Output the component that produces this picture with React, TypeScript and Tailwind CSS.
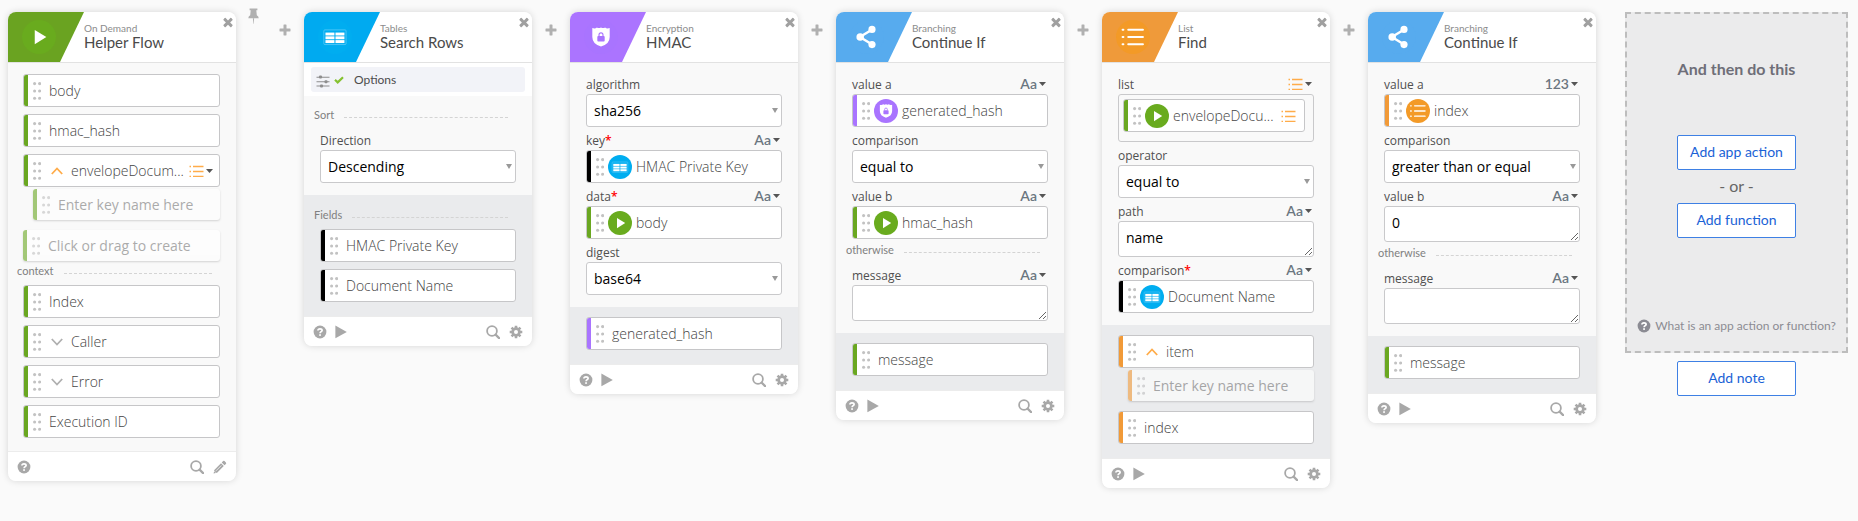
import React, { useId } from "react";

type Tone = "green" | "black" | "purple" | "orange";
type Kind = "play" | "table" | "lock" | "share" | "list";

const barTone: Record<Tone, string> = {
  green: "bg-[#6aa721]",
  black: "bg-black",
  purple: "bg-[#a974ff]",
  orange: "bg-[#f19a38]",
};

const badgeTone: Record<Kind, string> = {
  play: "bg-[#69ab1e]",
  table: "bg-[#00adf0]",
  lock: "bg-[#a974ff]",
  share: "bg-[#57abee]",
  list: "bg-[#f39a27]",
};

const headTone: Record<Kind, string> = {
  play: "bg-[#6aa321]",
  table: "bg-[#00aaf0]",
  lock: "bg-[#ab74ff]",
  share: "bg-[#57abee]",
  list: "bg-[#ef9a3a]",
};

/* ---------- drawings ---------- */

function Close() {
  return (
    <svg viewBox="0 0 1792 1792" className="size-3.5" fill="currentColor" aria-hidden="true">
      <path d="M1490 1322q0 40-28 68l-136 136q-28 28-68 28t-68-28l-294-294-294 294q-28 28-68 28t-68-28l-136-136q-28-28-28-68t28-68l294-294-294-294q-28-28-28-68t28-68l136-136q28-28 68-28t68 28l294 294 294-294q28-28 68-28t68 28l136 136q28 28 28 68t-28 68l-294 294 294 294q28 28 28 68z" />
    </svg>
  );
}

function Plus() {
  return (
    <svg viewBox="0 0 12 12" className="size-3" fill="currentColor" aria-hidden="true">
      <path d="M4.9 .5h2.2q.4 0 .4.4v3.6h3.6q.4 0 .4.4v2.2q0 .4-.4.4H7.500v3.600q0 .4-.4.4H4.900q-.4 0-.4-.4V7.500H.900q-.4 0-.4-.4V4.900q0-.4.4-.4h3.600V.900q0-.4.4-.4z" />
    </svg>
  );
}

function Pin() {
  return (
    <svg viewBox="0 0 11 16" className="h-4 w-[11px]" fill="currentColor" aria-hidden="true">
      <path d="M1.600 .6h7.800v1.600H8.300l.5 5q1.900.9 1.900 3H.300q0-2.100 1.900-3l.5-5H1.600z" />
      <path d="M4.900 10.200h1.200l-.4 5.600h-.4z" />
    </svg>
  );
}

function Help() {
  return (
    <svg viewBox="0 0 14 14" className="size-3.5 shrink-0" aria-hidden="true">
      <circle cx="7" cy="7" r="6.400" fill="currentColor" />
      <path d="M4.900 5.500Q5 3.800 7 3.800T9.100 5.400C9.100 6.700 7.100 6.700 7.100 8.300" fill="none" stroke="#fff" strokeWidth="1.700" />
      <rect x="6.200" y="9.200" width="1.700" height="1.700" fill="#fff" />
    </svg>
  );
}

function Run() {
  return (
    <svg viewBox="0 0 12 14" className="h-3.5 w-3" fill="currentColor" aria-hidden="true">
      <path d="M.4 .6 11.800 7 .4 13.200z" />
    </svg>
  );
}

function Search() {
  return (
    <svg viewBox="0 0 14 14" className="size-3.5" fill="none" stroke="currentColor" aria-hidden="true">
      <circle cx="6" cy="6" r="4.900" strokeWidth="1.800" />
      <path d="m9.600 9.600 3.500 3.500" strokeWidth="2.200" strokeLinecap="round" />
    </svg>
  );
}

function Gear() {
  return (
    <svg viewBox="0 0 14 14" className="size-3.5" aria-hidden="true">
      <g stroke="currentColor" strokeWidth="2.600">
        <path d="M7 .7v12.600M.7 7h12.600M2.550 2.550l8.900 8.900M11.450 2.550l-8.900 8.900" />
      </g>
      <circle cx="7" cy="7" r="4.700" fill="currentColor" />
      <circle cx="7" cy="7" r="2" fill="#fff" />
    </svg>
  );
}

function Pencil() {
  return (
    <svg viewBox="0 0 14 14" className="size-3.5" fill="currentColor" aria-hidden="true">
      <path d="M.6 13.400 1.300 9.900 8 3.200 10.800 6 4.100 12.700zM8.700 2.500 10.100 1.100q.7-.7 1.400 0l1.400 1.400q.7.7 0 1.400L11.500 5.300z" />
      <path d="m3 10.800 5.300-5.300" stroke="#fff" strokeWidth=".7" />
      <path d="m1.400 11.200 1.400 1.400" stroke="#fff" strokeWidth=".8" />
    </svg>
  );
}

function Grip() {
  return (
    <svg viewBox="0 0 8 18" className="h-[18px] w-2 shrink-0" fill="#c2c2c2" aria-hidden="true">
      {[1.600, 9, 16.300].map((y) => (
        <g key={y}>
          <circle cx="1.600" cy={y} r="1.550" />
          <circle cx="6.600" cy={y} r="1.550" />
        </g>
      ))}
    </svg>
  );
}

function Chevron({ up = false }: { up?: boolean }) {
  return (
    <svg viewBox="0 0 12 8" className="h-2 w-3 shrink-0" fill="none" strokeWidth="1.800" aria-hidden="true">
      {up ? <path d="M.8 7 6 1.500 11.200 7" stroke="#ffac4a" /> : <path d="M.8 1 6 6.500 11.200 1" stroke="#b0b0b0" />}
    </svg>
  );
}

function ListMark() {
  return (
    <svg viewBox="0 0 15 12" className="h-3 w-[15px] shrink-0" stroke="#ffac4a" strokeWidth="1.300" aria-hidden="true">
      <path d="M4 1.500h10.500M4 6.500h10.500M4 11.300h10.500M.5 1.500h1.500M.5 6.500h1.500M.5 11.300h1.500" />
    </svg>
  );
}

function Caret() {
  return (
    <svg viewBox="0 0 7 4" className="h-1 w-[7px] shrink-0" fill="#555" aria-hidden="true">
      <path d="M0 0h7L3.500 4z" />
    </svg>
  );
}

function Glyph({ kind }: { kind: Kind }) {
  switch (kind) {
    case "play":
      return (
        <svg viewBox="0 0 36 36" className="size-full" aria-hidden="true">
          <path d="M13.500 10.500v15.200l12.300-7.600z" fill="#fff" />
        </svg>
      );
    case "table":
      return (
        <svg viewBox="0 0 36 36" className="size-full" aria-hidden="true">
          <rect x="6.200" y="10.500" width="23.500" height="15.500" rx="1" fill="none" stroke="#6fd2fa" strokeWidth=".7" />
          <g fill="#fff">
            {[13.300, 17.300, 21.300].map((y) => (
              <g key={y}>
                <rect x="7.900" y={y} width="9.500" height="3.100" />
                <rect x="18.500" y={y} width="9.500" height="3.100" />
              </g>
            ))}
          </g>
        </svg>
      );
    case "lock":
      return (
        <svg viewBox="0 0 36 36" className="size-full" aria-hidden="true">
          <path d="M8.800 8.500q2.900 1 4.900-.5 2 1.200 4.300 0 2.300 1.200 4.300 0 2 1.500 4.900.5V18q0 7.500-9.200 10-9.200-2.500-9.200-10z" fill="#fff" />
          <rect x="14.100" y="17" width="7.800" height="5.800" rx="1" fill="#a974ff" />
          <path d="M15.900 17v-1.300a2.100 2.100 0 0 1 4.200 0V17" fill="none" stroke="#a974ff" strokeWidth="1.200" />
        </svg>
      );
    case "share":
      return (
        <svg viewBox="0 0 36 36" className="size-full" fill="#fff" aria-hidden="true">
          <path d="M23.500 10 10.500 18l13 8" fill="none" stroke="#fff" strokeWidth="2.600" />
          <circle cx="23.300" cy="10" r="3.800" />
          <circle cx="10.800" cy="18" r="4" />
          <circle cx="23.300" cy="26" r="3.800" />
        </svg>
      );
    case "list":
      return (
        <svg viewBox="0 0 36 36" className="size-full" stroke="#fff" strokeWidth="2.200" strokeLinecap="round" aria-hidden="true">
          <path d="M13 10.300h15.500M13 18h15.500M13 25.700h15.500M7 10.300h.8M7 18h.8M7 25.700h.8" />
        </svg>
      );
  }
}

/* ---------- rows inside a card ---------- */

function Badge({ kind }: { kind: Kind }) {
  return (
    <span className={`mx-1 size-6 shrink-0 rounded-full ${badgeTone[kind]}`}>
      <Glyph kind={kind} />
    </span>
  );
}

interface ItemProps {
  text: string;
  tone: Tone;
  chevron?: "up" | "down";
  badge?: Kind;
  trailing?: React.ReactNode;
}

function Item({ text, tone, chevron, badge, trailing }: ItemProps) {
  return (
    <div className="flex h-[33px] items-center overflow-hidden rounded-[3px] border border-[#c6c6c8] bg-white">
      <span className={`mr-[5px] w-1 shrink-0 self-stretch ${barTone[tone]}`} />
      <Grip />
      {chevron && (
        <button type="button" aria-label="Toggle" className="ml-2.5">
          <Chevron up={chevron === "up"} />
        </button>
      )}
      {badge && <Badge kind={badge} />}
      <span className={`text-sm font-light whitespace-nowrap text-[#444] ${badge ? "" : "ml-2"}`}>{text}</span>
      {trailing}
    </div>
  );
}

function NewItem({ tone, hint, nested = false }: { tone: Tone; hint: string; nested?: boolean }) {
  return (
    <div className={`flex h-[31px] items-center overflow-hidden rounded-[3px] bg-white opacity-60 shadow-[0_1px_2px_rgba(0,0,0,0.25)] ${nested ? "mt-0.5 ml-2.5" : ""}`}>
      <span className={`mr-[5px] w-1 shrink-0 self-stretch ${barTone[tone]}`} />
      <Grip />
      <input
        aria-label={hint}
        placeholder={hint}
        className="ml-2 w-0 min-w-0 flex-1 bg-transparent text-sm font-normal text-[#444] outline-none placeholder:text-[#777]"
      />
    </div>
  );
}

function Divider({ text, raised = false }: { text: string; raised?: boolean }) {
  return (
    <div className={`-ml-1.5 flex items-center gap-2.5 pr-2 ${raised ? "mb-1 h-5" : "h-[23px]"}`}>
      <span className="font-[Lato,sans-serif] text-[11px] text-[#808080]">{text}</span>
      <span className="mt-1 flex-1 border-t border-dashed border-[#d4d4d4]" />
    </div>
  );
}

function TypeButton({ type }: { type: "Aa" | "123" | "list" }) {
  return (
    <button type="button" aria-label="Change type" className="flex h-5 items-center gap-0.5 pr-0.5 text-sm font-semibold text-[#6b7680]">
      {type === "list" ? <ListMark /> : <span className="font-[Lato,sans-serif]">{type}</span>}
      <Caret />
    </button>
  );
}

interface FieldProps {
  label: string;
  required?: boolean;
  type?: "Aa" | "123" | "list";
  htmlFor?: string;
  children: React.ReactNode;
}

function Field({ label, required, type, htmlFor, children }: FieldProps) {
  const text = (
    <>
      {label}
      {required && <span className="font-semibold text-[#f00]">*</span>}
    </>
  );
  return (
    <div>
      <div className="flex h-[23px] items-end justify-between text-xs leading-[18px] text-[#505050]">
        {htmlFor ? <label htmlFor={htmlFor}>{text}</label> : <span>{text}</span>}
        {type && <TypeButton type={type} />}
      </div>
      {children}
    </div>
  );
}

function SelectField({ label, value }: { label: string; value: string }) {
  const id = useId();
  return (
    <Field label={label} htmlFor={id}>
      <div className="grid items-center">
        <select
          id={id}
          defaultValue={value}
          className="col-start-1 row-start-1 h-[33px] w-full appearance-none rounded-[3px] border border-[#c9c9cb] bg-white px-[7px] text-sm text-black"
        >
          <option>{value}</option>
        </select>
        <svg viewBox="0 0 6 5" className="pointer-events-none col-start-1 row-start-1 mr-1 h-[5px] w-1.5 justify-self-end" fill="#999" aria-hidden="true">
          <path d="M0 0h6L3 5z" />
        </svg>
      </div>
    </Field>
  );
}

function TextField({ label, value = "" }: { label: string; value?: string }) {
  const id = useId();
  return (
    <Field label={label} type="Aa" htmlFor={id}>
      <textarea
        id={id}
        defaultValue={value}
        rows={1}
        className="block h-9 w-full resize overflow-hidden rounded-[3px] border border-[#c9c9cb] bg-white px-[7px] py-1.5 text-sm text-black"
      />
    </Field>
  );
}

function Link({ label, required, type = "Aa", text, tone, badge }: { label: string; required?: boolean; type?: "Aa" | "123"; text: string; tone: Tone; badge: Kind }) {
  return (
    <Field label={label} required={required} type={type}>
      <Item text={text} tone={tone} badge={badge} />
    </Field>
  );
}

/* ---------- card ---------- */

interface CardProps {
  kind: Kind;
  group: string;
  title: string;
  trigger?: boolean;
  options?: boolean;
  output?: React.ReactNode;
  children: React.ReactNode;
}

function Card({ kind, group, title, trigger, options, output, children }: CardProps) {
  return (
    <section className="min-w-57 flex-1 basis-57 overflow-hidden rounded-lg bg-[#f9f9f9] shadow-[0_0_7px_rgba(0,0,0,0.15)]">
      <header className="flex h-[51px] border-b border-[#e2e2e2] bg-white">
        <div className={`flex w-19 shrink-0 items-center pl-3.5 [clip-path:polygon(0_0,100%_0,52px_100%,0_100%)] ${headTone[kind]}`}>
          <span className={`size-[34px] rounded-full ${badgeTone[kind]}`}>
            <Glyph kind={kind} />
          </span>
        </div>
        <div className="min-w-0 flex-1 pt-2.5 font-[Lato,sans-serif]">
          <p className="text-[10px] leading-3 text-[#8c8c8c]">{group}</p>
          <h2 className="text-[15px] leading-4 text-[#4a4a4a]">{title}</h2>
        </div>
        <button type="button" aria-label="Remove" className="mt-[3px] mr-px self-start text-[#a0a0a0]">
          <Close />
        </button>
      </header>
      {options && (
        <div className="bg-white px-[7px] py-1">
          <button type="button" className="flex h-[25px] w-full items-center rounded-[3px] bg-[#f2f3f8] pl-[5px] font-[Lato,sans-serif] text-xs text-[#4c4c4c]">
            <svg viewBox="0 0 14 13" className="mt-1 h-[13px] w-3.5" fill="#8d8d8d" aria-hidden="true">
              <path d="M.5 1.700h13v1H.5zM.5 6.200h13v1H.5zM.5 10.600h13v1H.5z" />
              <rect x="3" y=".6" width="3" height="3" rx="1" />
              <rect x="8.500" y="5.200" width="3" height="3" rx="1" />
              <rect x="4" y="9.600" width="3" height="3" rx="1" />
            </svg>
            <svg viewBox="0 0 10 8" className="ml-1 h-2 w-2.5" fill="none" stroke="#86c232" strokeWidth="2.200" aria-hidden="true">
              <path d="m1 3.800 2.700 2.600L9 1.200" />
            </svg>
            <span className="ml-2.5">Options</span>
          </button>
        </div>
      )}
      <div className={trigger ? "pt-[11px] pr-4 pb-3.5 pl-[15px]" : "px-4 pt-2 pb-3"}>{children}</div>
      {output && <div className="bg-[#eaebed] px-4 pt-2.5 pb-[15px]">{output}</div>}
      <footer className="flex h-[29px] items-center bg-white px-[9px] text-[#a8a8a8] shadow-[0_-1px_0_#ececec]">
        <button type="button" aria-label="Help">
          <Help />
        </button>
        {!trigger && (
          <button type="button" aria-label="Run" className="ml-2">
            <Run />
          </button>
        )}
        <button type="button" aria-label="Search" className="ml-auto">
          <Search />
        </button>
        <button type="button" aria-label={trigger ? "Edit" : "Settings"} className="ml-[9px]">
          {trigger ? <Pencil /> : <Gear />}
        </button>
      </footer>
    </section>
  );
}

function AddStep() {
  return (
    <button type="button" aria-label="Add step" className="mt-3 flex w-[38px] shrink-0 justify-center text-[#b0b0b0]">
      <Plus />
    </button>
  );
}

function OutlineButton({ children }: { children: React.ReactNode }) {
  return (
    <button type="button" className="h-[35px] w-[119px] rounded-xs border border-[#3e80e4] bg-white pb-0.5 text-sm text-[#1a62d6]">
      {children}
    </button>
  );
}

export default function App() {
  return (
    <main className="min-h-screen overflow-x-auto bg-[#fafafa] font-['Open_Sans','Noto_Sans',sans-serif]">
      <div className="flex items-start py-3 pr-2.5 pl-2">
        <Card kind="play" group="On Demand" title="Helper Flow" trigger>
          <div className="grid gap-[7px]">
            <Item text="body" tone="green" />
            <Item text="hmac_hash" tone="green" />
            <Item
              text="envelopeDocum..."
              tone="green"
              chevron="up"
              trailing={
                <button type="button" aria-label="Change type" className="mr-1.5 ml-auto flex items-center gap-0.5">
                  <ListMark />
                  <Caret />
                </button>
              }
            />
          </div>
          <NewItem tone="green" hint="Enter key name here" nested />
          <div className="mt-2.5">
            <NewItem tone="green" hint="Click or drag to create" />
          </div>
          <Divider text="context" raised />
          <div className="grid gap-[7px]">
            <Item text="Index" tone="green" />
            <Item text="Caller" tone="green" chevron="down" />
            <Item text="Error" tone="green" chevron="down" />
            <Item text="Execution ID" tone="green" />
          </div>
        </Card>

        <button type="button" aria-label="Pin" className="-mt-1 flex w-[30px] shrink-0 justify-center pl-1 text-[#b0b0b0]">
          <Pin />
        </button>

        <AddStep />
        <Card
          kind="table"
          group="Tables"
          title="Search Rows"
          options
          output={
            <>
              <Divider text="Fields" raised />
              <div className="grid gap-[7px]">
                <Item text="HMAC Private Key" tone="black" />
                <Item text="Document Name" tone="black" />
              </div>
            </>
          }
        >
          <Divider text="Sort" />
          <SelectField label="Direction" value="Descending" />
        </Card>

        <AddStep />
        <Card kind="lock" group="Encryption" title="HMAC" output={<Item text="generated_hash" tone="purple" />}>
          <SelectField label="algorithm" value="sha256" />
          <Link label="key" required text="HMAC Private Key" tone="black" badge="table" />
          <Link label="data" required text="body" tone="green" badge="play" />
          <SelectField label="digest" value="base64" />
        </Card>

        <AddStep />
        <Card kind="share" group="Branching" title="Continue If" output={<Item text="message" tone="green" />}>
          <Link label="value a" text="generated_hash" tone="purple" badge="lock" />
          <SelectField label="comparison" value="equal to" />
          <Link label="value b" text="hmac_hash" tone="green" badge="play" />
          <Divider text="otherwise" />
          <TextField label="message" />
        </Card>

        <AddStep />
        <Card
          kind="list"
          group="List"
          title="Find"
          output={
            <>
              <Item text="item" tone="orange" chevron="up" />
              <NewItem tone="orange" hint="Enter key name here" nested />
              <div className="mt-2.5">
                <Item text="index" tone="orange" />
              </div>
            </>
          }
        >
          <Field label="list" type="list">
            <div className="h-12 rounded-[3px] border border-[#c9c9cb] pt-1 pr-2 pl-1">
              <Item
                text="envelopeDocu..."
                tone="green"
                badge="play"
                trailing={
                  <span className="mr-2 ml-auto">
                    <ListMark />
                  </span>
                }
              />
            </div>
          </Field>
          <SelectField label="operator" value="equal to" />
          <TextField label="path" value="name" />
          <Link label="comparison" required text="Document Name" tone="black" badge="table" />
        </Card>

        <AddStep />
        <Card kind="share" group="Branching" title="Continue If" output={<Item text="message" tone="green" />}>
          <Link label="value a" type="123" text="index" tone="orange" badge="list" />
          <SelectField label="comparison" value="greater than or equal" />
          <TextField label="value b" value="0" />
          <Divider text="otherwise" />
          <TextField label="message" />
        </Card>

        <aside className="ml-[29px] flex min-w-[223px] flex-1 basis-[223px] flex-col items-center font-[Lato,sans-serif]">
          <div className="flex w-full flex-col items-center border-2 border-dashed border-[#bdbdbd] bg-[#ebebec] pt-[43px] pb-[15px]">
            <h2 className="mb-[54px] text-base leading-6 font-bold text-[#6e6e78]">And then do this</h2>
            <OutlineButton>Add app action</OutlineButton>
            <p className="h-[33px] text-base leading-8 text-[#666]">- or -</p>
            <OutlineButton>Add function</OutlineButton>
            <a href="#help" className="mt-[78px] flex items-center gap-1 text-xs leading-5 whitespace-nowrap text-[#8b8b93]">
              <Help />
              What is an app action or function?
            </a>
          </div>
          <div className="mt-2">
            <OutlineButton>Add note</OutlineButton>
          </div>
        </aside>
      </div>
    </main>
  );
}
